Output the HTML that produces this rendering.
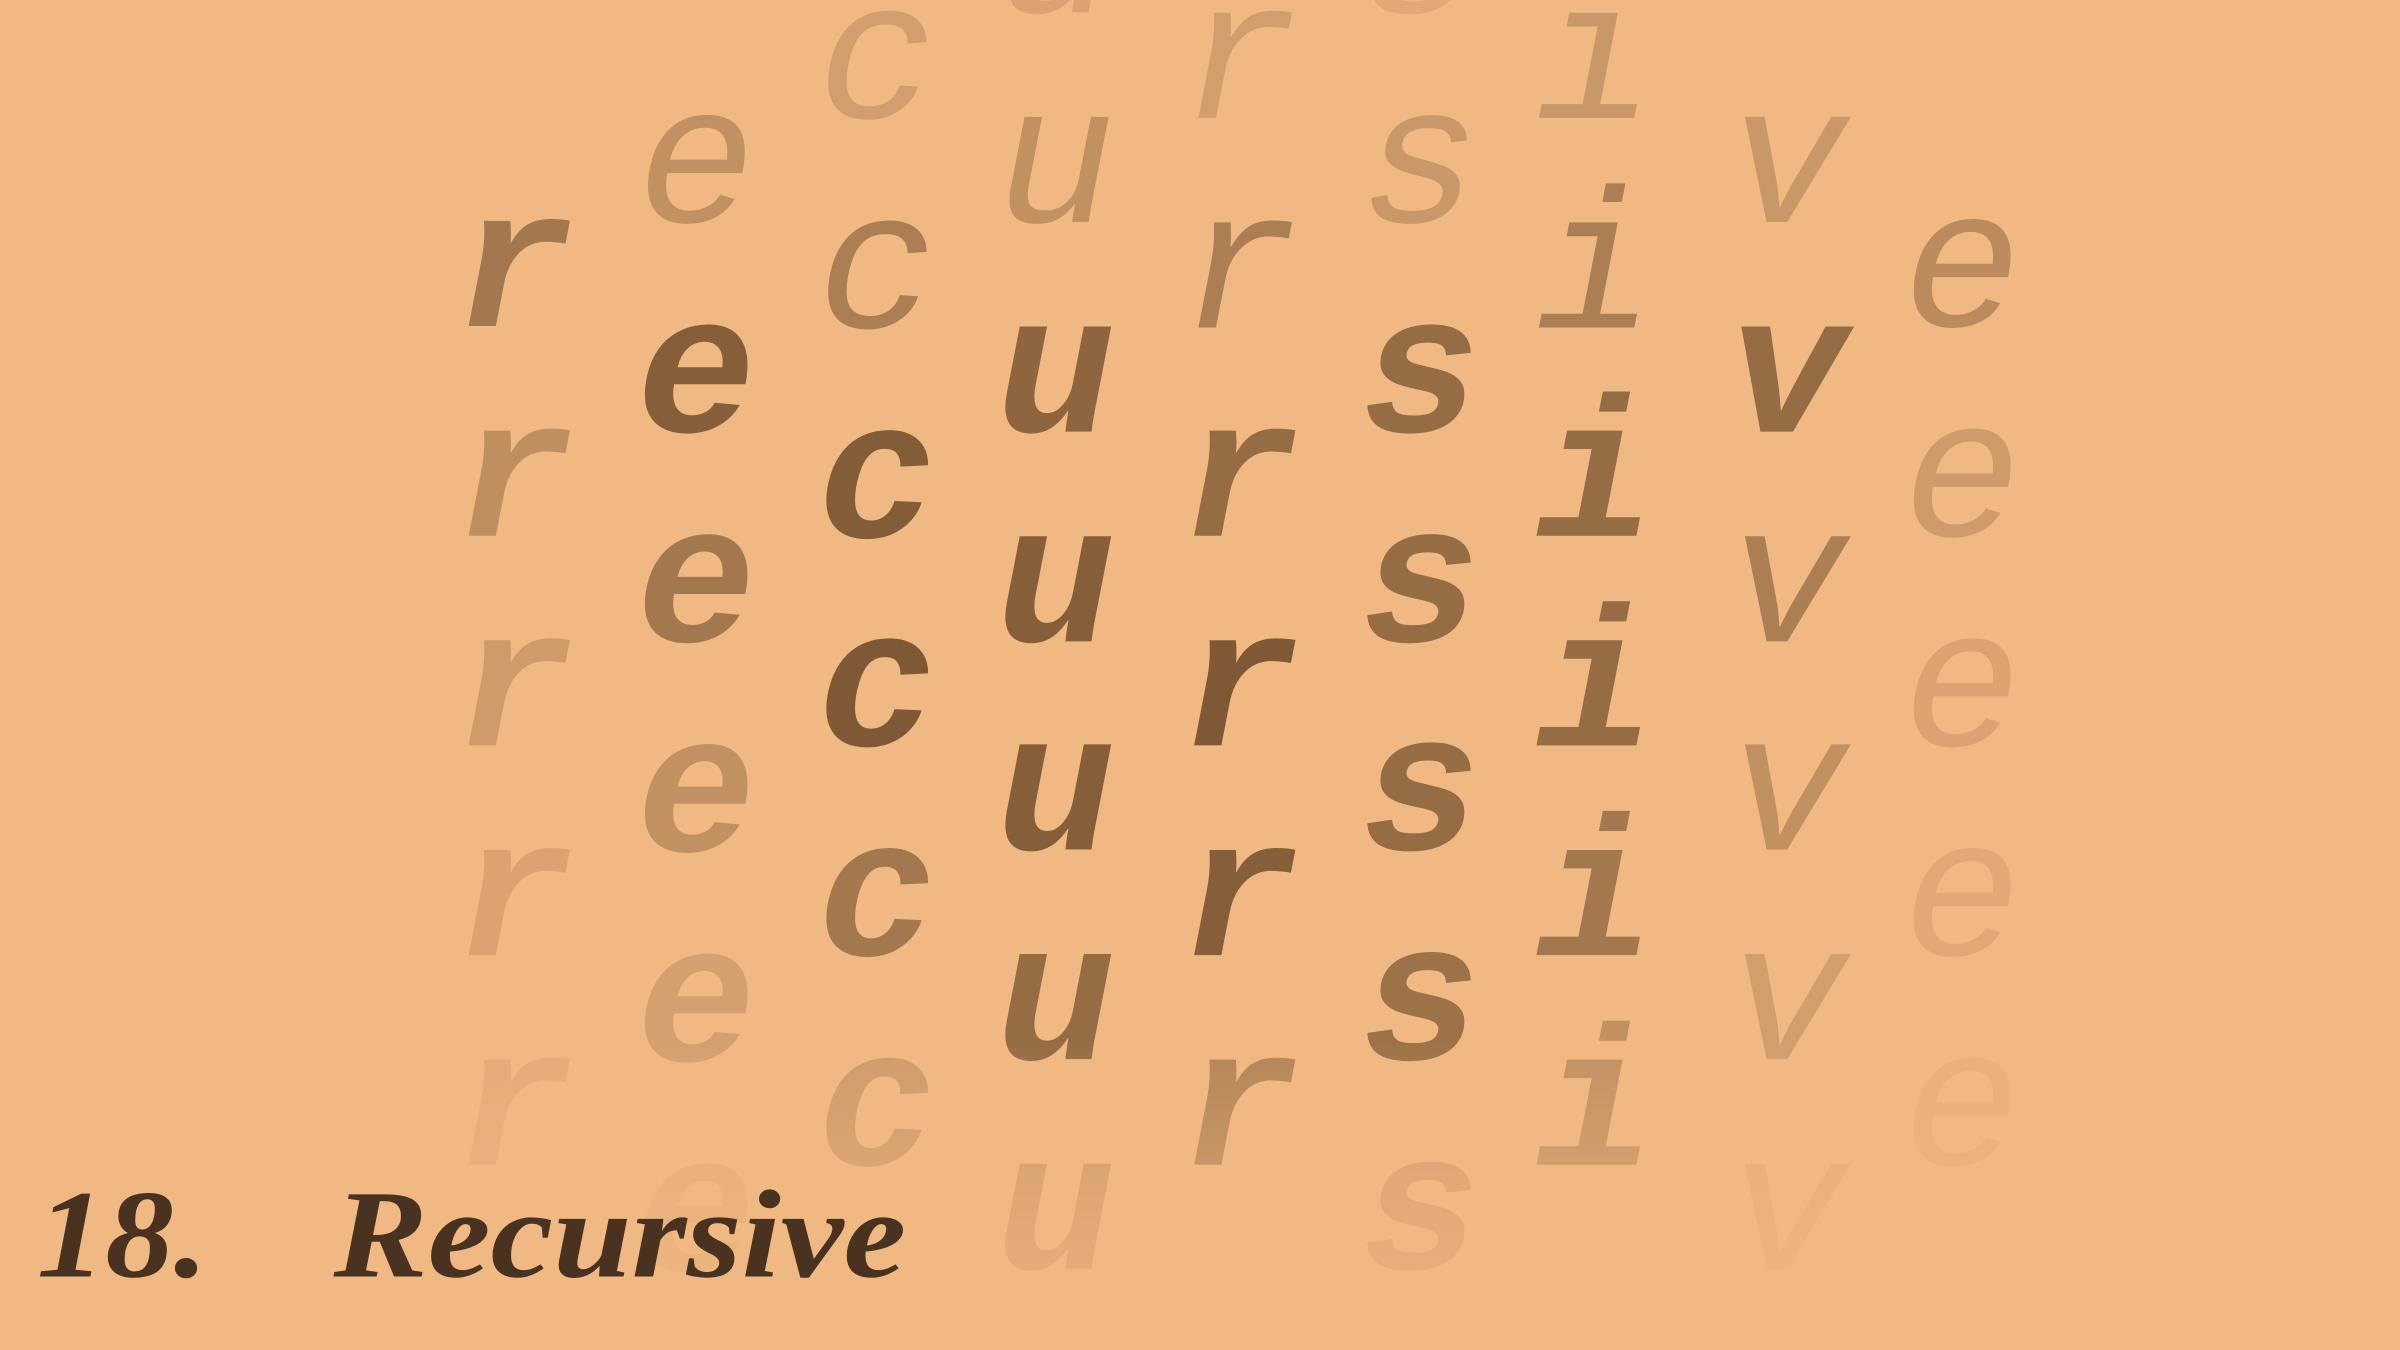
<!DOCTYPE html>
<html><head><meta charset="utf-8"><style>
html,body{margin:0;padding:0;background:#f0b882;width:2400px;height:1350px;overflow:hidden}
svg{display:block;overflow:hidden}
</style></head><body>
<svg width="2400" height="1350" viewBox="0 0 1568 882" xmlns="http://www.w3.org/2000/svg">
<defs>
<linearGradient id="fade" x1="0" y1="0" x2="0" y2="1">
<stop offset="0" stop-color="#f0b882" stop-opacity="0"/>
<stop offset="1" stop-color="#f0b882" stop-opacity="0.85"/>
</linearGradient>
</defs>
<rect width="1568" height="882" fill="#f0b882"/>
<g font-family="Liberation Mono, monospace" font-style="italic" font-size="130" text-anchor="middle" fill="#5a3a1c">
<text x="336" y="213" font-weight="bold" opacity="0.5">r</text>
<text x="336" y="350" font-weight="bold" opacity="0.32">r</text>
<text x="336" y="487" font-weight="bold" opacity="0.22">r</text>
<text x="336" y="624" font-weight="bold" opacity="0.15">r</text>
<text x="336" y="761" font-weight="bold" opacity="0.08">r</text>
<text x="455" y="145" opacity="0.3">e</text>
<text x="455" y="282" font-weight="bold" opacity="0.7">e</text>
<text x="455" y="419" font-weight="bold" opacity="0.5">e</text>
<text x="455" y="556" font-weight="bold" opacity="0.3">e</text>
<text x="455" y="693" font-weight="bold" opacity="0.18">e</text>
<text x="455" y="830" font-weight="bold" opacity="0.07">e</text>
<text x="573" y="77" opacity="0.2">c</text>
<text x="573" y="214" opacity="0.45">c</text>
<text x="573" y="351" font-weight="bold" opacity="0.72">c</text>
<text x="573" y="487" font-weight="bold" opacity="0.75">c</text>
<text x="573" y="624" font-weight="bold" opacity="0.5">c</text>
<text x="573" y="761" font-weight="bold" opacity="0.22">c</text>
<text x="690" y="8" opacity="0.15">u</text>
<text x="690" y="145" opacity="0.3">u</text>
<text x="690" y="282" font-weight="bold" opacity="0.65">u</text>
<text x="690" y="419" font-weight="bold" opacity="0.7">u</text>
<text x="690" y="555" font-weight="bold" opacity="0.7">u</text>
<text x="690" y="692" font-weight="bold" opacity="0.6">u</text>
<text x="690" y="829" font-weight="bold" opacity="0.22">u</text>
<text x="810" y="77" opacity="0.2">r</text>
<text x="810" y="214" opacity="0.45">r</text>
<text x="810" y="350" font-weight="bold" opacity="0.6">r</text>
<text x="810" y="487" font-weight="bold" opacity="0.75">r</text>
<text x="810" y="624" font-weight="bold" opacity="0.7">r</text>
<text x="810" y="761" font-weight="bold" opacity="0.4">r</text>
<text x="928" y="8" opacity="0.1">s</text>
<text x="928" y="145" opacity="0.25">s</text>
<text x="928" y="282" font-weight="bold" opacity="0.6">s</text>
<text x="928" y="419" font-weight="bold" opacity="0.6">s</text>
<text x="928" y="555" font-weight="bold" opacity="0.6">s</text>
<text x="928" y="692" font-weight="bold" opacity="0.55">s</text>
<text x="928" y="829" font-weight="bold" opacity="0.18">s</text>
<text x="1042" y="77" opacity="0.25">i</text>
<text x="1042" y="214" opacity="0.45">i</text>
<text x="1042" y="350" font-weight="bold" opacity="0.6">i</text>
<text x="1042" y="487" font-weight="bold" opacity="0.6">i</text>
<text x="1042" y="624" font-weight="bold" opacity="0.5">i</text>
<text x="1042" y="761" font-weight="bold" opacity="0.3">i</text>
<text x="1168" y="145" opacity="0.25">v</text>
<text x="1168" y="282" font-weight="bold" opacity="0.6">v</text>
<text x="1168" y="419" opacity="0.45">v</text>
<text x="1168" y="555" opacity="0.3">v</text>
<text x="1168" y="692" opacity="0.2">v</text>
<text x="1168" y="829" opacity="0.07">v</text>
<text x="1282" y="213" opacity="0.35">e</text>
<text x="1282" y="350" opacity="0.22">e</text>
<text x="1282" y="487" opacity="0.15">e</text>
<text x="1282" y="624" opacity="0.1">e</text>
<text x="1282" y="761" opacity="0.05">e</text>
</g>
<rect x="0" y="680" width="1568" height="202" fill="url(#fade)"/>
<g font-family="Liberation Serif, serif" font-style="italic" font-weight="bold" fill="#4a3220">
<text x="24" y="834" font-size="82" textLength="112" lengthAdjust="spacingAndGlyphs">18.</text>
<text x="218" y="834" font-size="82" textLength="374" lengthAdjust="spacingAndGlyphs">Recursive</text>
</g>
</svg>
</body></html>
